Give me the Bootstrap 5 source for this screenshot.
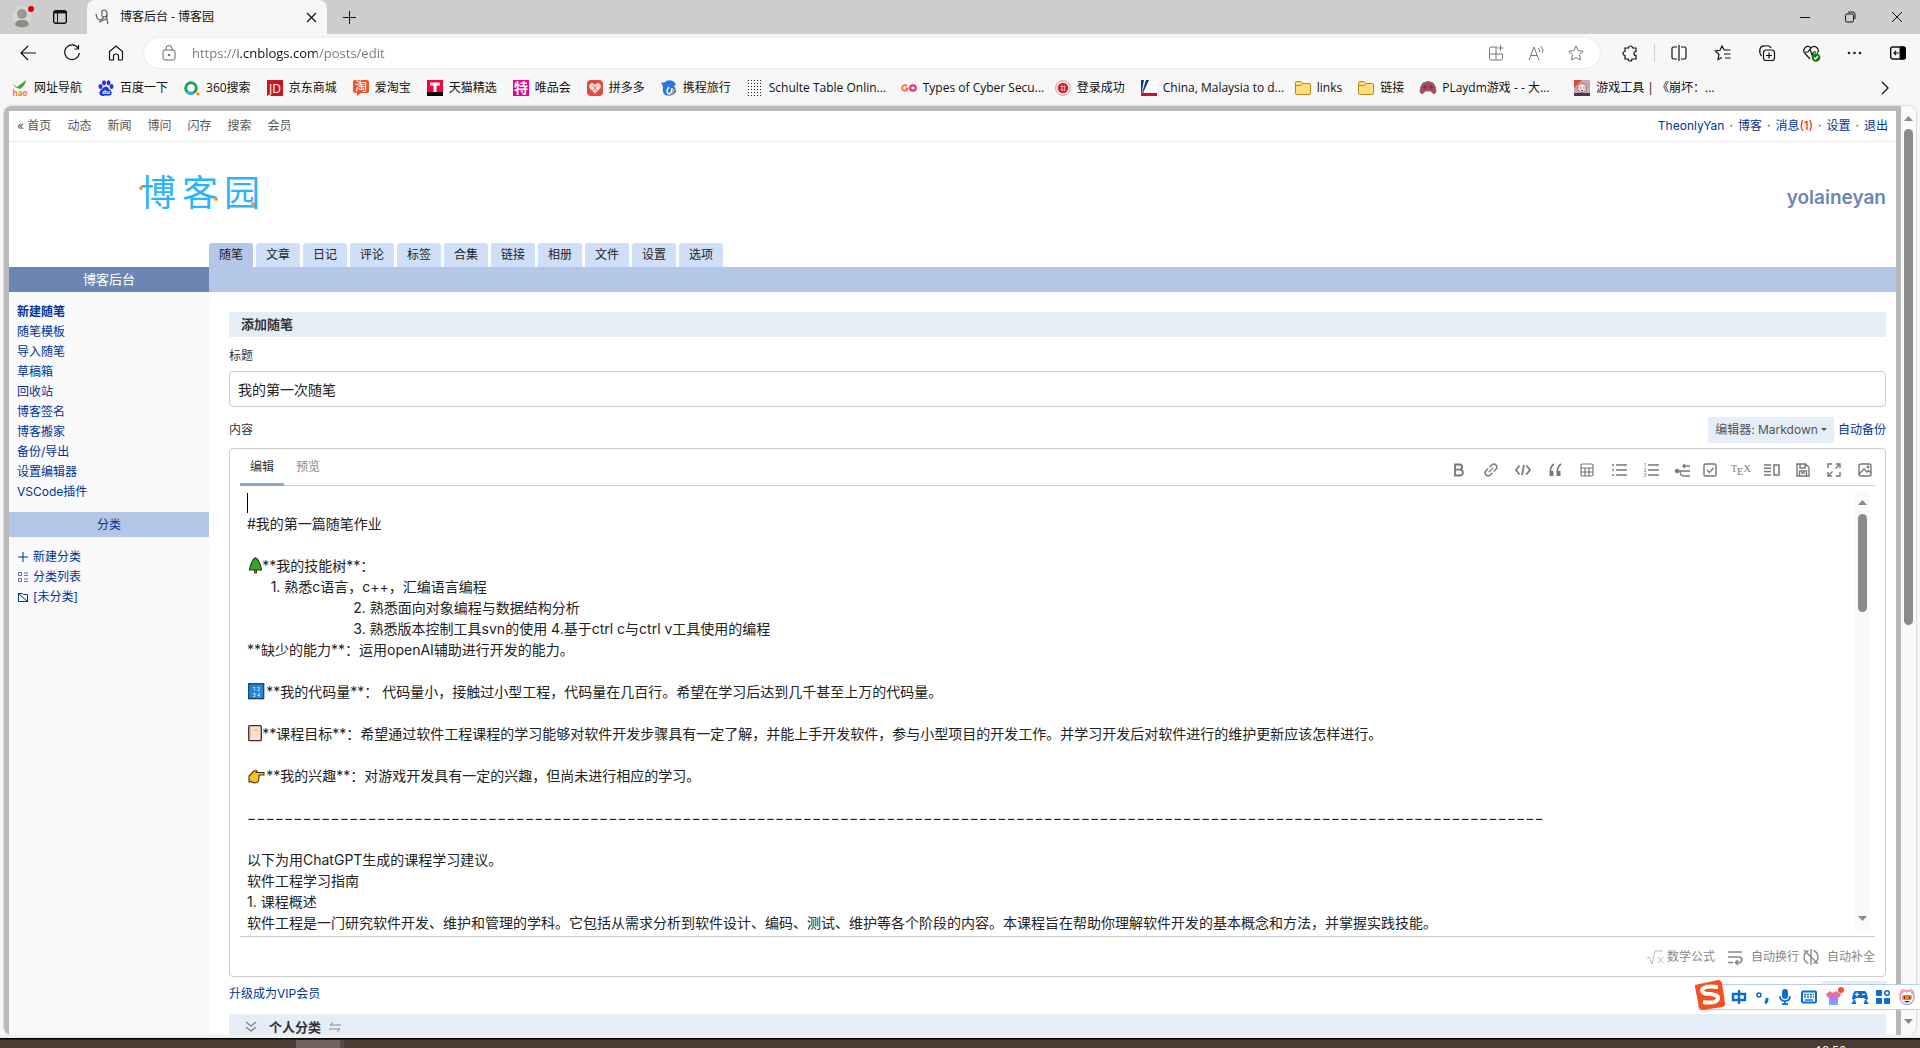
<!DOCTYPE html>
<html lang="zh-CN">
<head>
<meta charset="utf-8">
<meta name="viewport" content="width=device-width, initial-scale=1">
<title>博客后台 - 博客园</title>
<link href="https://cdn.jsdelivr.net/npm/bootstrap@5.3.0/dist/css/bootstrap.min.css" rel="stylesheet">
<style>
:root{--navy:#003399;--pale:#e5edf7;--steel:#b4c7e6;--frame:#b9b9b9}
html,body{height:100%}
body{font-family:Inter,"Noto Sans CJK SC",sans-serif;font-size:12px;line-height:18px;color:#333;background:#f7f7f7;overflow:hidden}
a{color:var(--navy);text-decoration:none}
button{background:none;border:0;padding:0;color:inherit}
svg{display:block;flex:none;overflow:visible}
svg:not([fill]){fill:none}
svg:not([stroke]){stroke:currentColor}
svg text{stroke:none;text-anchor:middle}
.chrome{font-family:"Open Sans","Noto Sans CJK SC",sans-serif;color:#111}
.tabstrip{background:#cdcdcd;height:34px}
.tabstrip-left{gap:20px;width:87px;padding-left:13px}
.tab-active{width:240px;background:#f7f7f7;border-radius:8px 8px 0 0;padding:0 11px 0 8px;gap:10px}
.win-controls{gap:32px;padding-right:17px}
.addrbar{height:38px;padding:0 14px 0 20px}
.nav-icons{gap:28px;width:124px}
.pill{height:30px;border-radius:15px;background:#fff;box-shadow:0 0 3px #ddd;padding:0 16px 0 18px}
.pill input{border:0;outline:0;font-size:13px;padding:0 0 0 16px;color:transparent;caret-color:#111;background:linear-gradient(90deg,#767676 62px,#111 62px,#111 141px,#767676 141px);-webkit-background-clip:text;background-clip:text}
.pill-icons{color:#777;gap:24px}
.tool-icons{gap:28px;padding-left:22px}
.split-group{gap:16px;margin-left:-12px}
.bookmarks{height:34px;padding:0 31px 2px 12px;gap:16px}
.bookmarks a{color:#111;gap:6px;white-space:nowrap}
.bookmarks .wide-bm{width:138px}
.viewport{margin:0 4px;min-height:0;border-radius:8px;overflow:hidden;box-shadow:0 0 2px #999}
.page{background:#fff;border:5px solid var(--frame);border-bottom:0;min-width:0;overflow:hidden}
.topnav{height:31px;border-bottom:1px dotted #d8d8d8;padding:0 8px}
.topnav .left a{color:#555}
.topnav .right{gap:5px}
.topnav .unread{color:#f00}
.masthead{height:101px;padding:0 10px 0 131px}
.brand{font-size:36px;line-height:40px;color:#2bb3ff;gap:6px}
.brand svg{left:0;top:0}
.blogname{font-size:19px;font-weight:600;color:#6b86b3;padding-top:10px}
.maintabs{gap:3px;padding-left:200px}
.maintabs a{width:44px;height:24px;line-height:24px;text-align:center;background:#cfdff8;color:#222;border-radius:3px 3px 0 0}
.maintabs a.active{background:var(--steel)}
.bar{height:25px;background:var(--steel)}
.bar-title{width:200px;background:#6b86b3;color:#fff;line-height:25px;font-size:13px}
.side{width:200px;background:#f9f9f9;padding-top:10px;line-height:20px}
.side a{padding-left:8px;gap:4px}
.side-head{height:25px;line-height:25px;font-size:12px;background:var(--steel);color:var(--navy);margin:10px 0}
.main-col{padding:20px 10px 0 20px;min-width:0}
.panel-head{height:25px;background:var(--pale);font-size:13px;font-weight:700;line-height:24px;padding:0 12px}
.field-label{padding-top:10px}
.title-input{height:36px;font-size:14px;color:#222;border:1px solid #ccc;border-radius:4px;padding:0 8px 1px;margin-top:6px}
.content-row{margin-top:10px}
.editor-pick{background:var(--pale);color:#555;width:126px;height:26px}
.editor{border:1px solid #ccc;border-radius:4px;padding:0 10px;margin-top:5px;color:#333}
.ed-head{border-bottom:1px solid #ccc;height:37px;color:#777}
.ed-tabs{gap:2px}
.ed-tools{gap:11px;padding:6px 2px 0 0}
.ed-tab{width:44px;height:37px;line-height:36px;text-align:center;color:#888;border-bottom:3px solid transparent}
.ed-tab.active{color:#333;border-color:#8fa5cd}
.tb1{gap:16px}.tb2{gap:15px}
.ed-body{padding:6px 5px 3px 7px;border-bottom:1px solid #ccc}
.ed-body textarea{font-size:14px;line-height:21px;color:#222;border:0;outline:0;resize:none;padding:0;overflow:hidden;height:441px;min-width:0;background:none}
.over{position:absolute;left:8px}
.caret{width:1px;height:20px;background:#000;left:7px;top:7px}
.l4{top:71px}.l10{top:197px}.l12{top:239px}.l14{top:281px}
.sbar{width:15px;background:#fafafa;color:#8a8a8a}
.sbar i{width:9px;border-radius:5px;background:#8b8b8b}
.ed-body .sbar{margin:-1px 0 2px}
.ed-body .sbar i{height:98px}
.page-sbar i{height:496px}
.sbar svg{fill:#8a8a8a;stroke:none}
.ed-foot{height:39px;color:#888}
.vip-row{height:37px}
.covered{width:64px;height:25px;background:var(--pale)}
.taskbar{height:13px}
.taskbar .edge{height:4px;border-bottom:1px solid #000;background:#f0f0f0}
.taskbar .strip{height:9px;background:#4a3b33;padding-left:296px;border-top:1px solid #222}
.task-btn{width:48px;height:9px;background:#6e625a;border-right:4px solid #574a43}
.clock{color:#fff;line-height:18px;padding-right:74px;font-family:"Open Sans",sans-serif;margin-top:2px}
.ime{position:fixed;right:0;bottom:38px;width:222px;height:26px;background:#fff;border:1px solid #b9cdea;border-right:0;border-radius:2px;color:#0a6cd6;padding:0 5px 0 32px}
.ime .logo{position:absolute;left:-5px;top:-6px}
</style>
</head>
<body class="d-flex flex-column">
<header class="chrome">
 <div class="tabstrip d-flex align-items-stretch">
  <div class="tabstrip-left d-flex align-items-center">
   <svg width="20" height="24" viewBox="0 0 20 24"><ellipse cx="9" cy="12" rx="9.500" ry="11" fill="#d9d5d1" stroke="none"/><circle cx="9" cy="9" r="5" fill="#999" stroke="none"/><path d="M2 20q0-5 7-5t7 5q-7 5-14 0z" fill="#8f8b87" stroke="none"/><circle cx="18" cy="4" r="3" fill="#e60000" stroke="none"/></svg>
   <svg width="14" height="14"><rect x=".7" y=".7" width="12.600" height="12.600" rx="2" stroke-width="1.400"/><path d="M1 2.200h12" stroke-width="2.400"/><path d="M4.500 3v10"/></svg>
  </div>
  <div class="tab-active d-flex align-items-center">
   <svg width="15" height="16" viewBox="0 0 15 16" stroke="#555" stroke-width="1.200"><path d="M1 5q1 6 4 6 3-1 4-3M7 5q-1-4 2-4t3 4q0 3-3 3T7 5M12 4q-1 6 1 11M4 13l7-3"/></svg>
   <span class="flex-grow-1">博客后台 - 博客园</span>
   <button aria-label="关闭标签页"><svg width="9" height="9"><path d="M0 0l9 9M9 0L0 9" stroke-width="1.200"/></svg></button>
  </div>
  <button class="ms-3" aria-label="新建标签页"><svg width="13" height="13"><path d="M6.500 0v13M0 6.500h13"/></svg></button>
  <div class="win-controls d-flex align-items-center ms-auto">
   <button aria-label="最小化"><svg width="14" height="12"><path d="M3 6.500h10"/></svg></button>
   <button aria-label="还原"><svg width="14" height="12"><rect x="2.500" y="3" width="8" height="8" rx="1.500"/><path d="M5 1.500Q5 1 7 1h2.500q2.500 0 2.500 2.500V8"/></svg></button>
   <button aria-label="关闭"><svg width="14" height="12"><path d="M3 1l10 10M13 1L3 11"/></svg></button>
  </div>
 </div>
 <div class="addrbar d-flex align-items-center">
  <div class="nav-icons d-flex">
   <button aria-label="后退"><svg width="16" height="16"><path d="M16 8H1M8 1L1 8l7 7" stroke-width="1.200"/></svg></button>
   <button aria-label="刷新"><svg width="16" height="16"><path d="M14 3A7.300 7.300 0 1 0 15.300 8M14.500 0v4h-4" stroke-width="1.200"/></svg></button>
   <button aria-label="主页"><svg width="16" height="16"><path d="M1.500 6.500L8 1l6.500 5.500V14q0 1-1 1h-3v-4q0-2-2.500-2t-2.500 2v4h-3q-1 0-1-1z" stroke-width="1.200"/></svg></button>
  </div>
  <div class="pill d-flex align-items-center flex-grow-1">
   <svg width="14" height="16" stroke="#666"><rect x="1" y="5" width="12" height="10" rx="2"/><path d="M4 5V3.500a3 3 0 0 1 6 0V5"/><circle cx="7" cy="10" r=".8" fill="#555"/></svg>
   <input class="flex-grow-1" aria-label="地址栏" value="https://i.cnblogs.com/posts/edit">
   <div class="pill-icons d-flex">
    <svg width="16" height="16"><path d="M9 2H3Q1.500 2 1.500 3.500v10Q1.500 15 3 15h10q1.500 0 1.500-1.500V9H1.500M8 2v13M12.500 0v6M9.500 3h6"/></svg>
    <svg width="16" height="16"><path d="M1 15L6 2l5 13M3 10.500h6M10 3q2 2 1.500 4M12.500 1Q16 4 14.500 8"/></svg>
    <svg width="16" height="16" viewBox="0 0 16 16"><path d="M8 1l2.200 4.600 5 .7-3.600 3.500.9 5.100L8 12.500l-4.500 2.400.9-5.100L.8 6.300l5-.7z"/></svg>
   </div>
  </div>
  <div class="tool-icons d-flex align-items-center">
   <svg width="16" height="16" stroke-width="1.200"><path d="M4 3h2.500a2 2 0 1 1 4 0H14v3.500a2 2 0 1 0 0 4V14h-4a2 2 0 0 1-4 0H3v-3.500a2 2 0 1 1 0-4V3z"/></svg>
   <div class="split-group d-flex align-items-center"><svg width="1" height="18" stroke="#ccc"><path d="M.5 0v18"/></svg>
   <svg width="16" height="16" stroke-width="1.200"><path d="M6 2H2.500Q1 2 1 3.500v9Q1 14 2.500 14H6M10 2h3.500Q15 2 15 3.500v9q0 1.500-1.500 1.500H10M8 0v16"/></svg></div>
   <svg width="16" height="16" stroke-width="1.200"><path d="M15.500 5H9.300L7 1 5 5.300l-4.500.7L4 9.500 3 14.500l4-2M9 9h6.500M10 13h5.500"/></svg>
   <svg width="16" height="16" stroke-width="1.200"><rect x="4.500" y="5" width="11" height="10.500" rx="2.500"/><path d="M10 7.500v6M7 10.500h6M2.500 11Q0 8 1 4q1-3.500 5-3 5-1 6 2"/></svg>
   <svg width="16" height="16" stroke-width="1.200"><path d="M7 14L1.500 8C-1 4 4-1 8 3c4-4 9 1 6.500 5M2 7h3l2-3 2 6 1.500-3H13"/><circle cx="13" cy="12.500" r="4.300" fill="#107c10" stroke="none"/><path d="M11 12.500l1.500 1.500 2.500-3" stroke="#fff"/></svg>
   <svg width="15" height="16"><g fill="#222" stroke="none"><circle cx="2" cy="8" r="1.300"/><circle cx="7.500" cy="8" r="1.300"/><circle cx="13" cy="8" r="1.300"/></g></svg>
   <svg width="16" height="16"><rect x=".7" y="2" width="14.600" height="12" rx="2" stroke-width="1.400"/><path d="M10 2h4q1.300 0 1.300 1.300v9.400Q15.300 14 14 14h-4z" fill="#000"/><path d="M9 8H4m2-2L4 8l2 2" stroke-width="1.200"/></svg>
  </div>
 </div>
 <nav class="bookmarks d-flex align-items-center">
  <a class="d-flex align-items-center" href="#"><svg width="16" height="16"><path d="M1 4l4 3 9-7q0 5-6 9-5-1-7-5z" fill="#4a3" stroke="none"/><text x="8" y="16" font-size="8" font-weight="700" fill="#f47a1f">hao</text></svg>网址导航</a>
  <a class="d-flex align-items-center" href="#"><svg width="16" height="16"><g fill="#2832e0" stroke="none"><ellipse cx="2.500" cy="6.500" rx="2" ry="2.500"/><ellipse cx="6" cy="2.800" rx="2" ry="2.600"/><ellipse cx="10.500" cy="2.800" rx="2" ry="2.600"/><ellipse cx="13.600" cy="6.500" rx="1.900" ry="2.500"/><path d="M8 6.500q2 0 3 2.500 4 3 2 6-2 1-5 .5-4 1-6-.5-2-3 2-6 2-2.500 4-2.500z"/></g><text x="8" y="14" font-size="6" font-weight="700" fill="#fff">du</text></svg>百度一下</a>
  <a class="d-flex align-items-center" href="#"><svg width="16" height="16"><rect width="16" height="16" fill="#fff" stroke="none"/><circle cx="7" cy="8" r="5.300" stroke="#19a35b" stroke-width="3"/><path d="M3 12q3 3 7 1" stroke="#35b1e8" stroke-width="2.500"/><circle cx="14" cy="14" r="1.700" fill="#f80" stroke="none"/></svg>360搜索</a>
  <a class="d-flex align-items-center" href="#"><svg width="16" height="16"><rect width="16" height="16" fill="#c91623" stroke="none"/><text x="8" y="12.500" font-size="12" fill="#fff">JD</text></svg>京东商城</a>
  <a class="d-flex align-items-center" href="#"><svg width="16" height="16"><path d="M2 0h12q2 0 2 2v9q0 2-2 2H8l-4 3v-3H2q-2 0-2-2V2q0-2 2-2z" fill="#f0562a" stroke="none"/><text x="8" y="11" font-size="12" fill="#fff">淘</text></svg>爱淘宝</a>
  <a class="d-flex align-items-center" href="#"><svg width="16" height="16"><path d="M0 0h16v12H0z" fill="#ff0036" stroke="none"/><path d="M0 12h16v4H0z" fill="#000" stroke="none"/><path d="M3 4h10M8 4v8" stroke="#fff" stroke-width="3"/></svg>天猫精选</a>
  <a class="d-flex align-items-center" href="#"><svg width="16" height="16"><rect width="16" height="16" fill="#e5048c" stroke="none"/><text x="8" y="13" font-size="14" font-weight="700" fill="#fff">特</text></svg>唯品会</a>
  <a class="d-flex align-items-center" href="#"><svg width="16" height="16"><rect width="16" height="16" rx="4" fill="#e2493f" stroke="none"/><path d="M8 14L2.500 8C1 4 5 1.500 8 4.500 11 1.500 15 4 13.500 8z" fill="#fbe3df" stroke="none"/><path d="M5 5l6 6M11 5l-6 6M8 4v9" stroke="#e2867e"/></svg>拼多多</a>
  <a class="d-flex align-items-center" href="#"><svg width="16" height="16"><path d="M0 2q2 1 4 0 3-3 8-1l3 3-2 2q4 5 0 8-4 3-9 1Q1 12 2 8 2 6 0 2z" fill="#2577e3" stroke="none"/><path d="M8 7q-4 5 0 7 3-1 3-6" stroke="#fff" stroke-width="1.600"/><path d="M9 14q4-1 4-5" stroke="#ffa21a" stroke-width="1.600"/></svg>携程旅行</a>
  <a class="d-flex align-items-center wide-bm" href="#"><svg width="16" height="16"><path d="M1 .5h15M1 3.500h15M1 6.500h15M1 9.500h15M1 12.500h15M1 15.500h15" stroke="#222" stroke-dasharray="1 2"/></svg>Schulte Table Onlin...</a>
  <a class="d-flex align-items-center wide-bm" href="#"><svg width="16" height="16"><path d="M6 6a2.800 2.800 0 1 0 .7 2.500H4.500" stroke="#ff6a3d" stroke-width="1.800"/><circle cx="12" cy="8" r="2.800" stroke="#f0286a" stroke-width="2"/></svg>Types of Cyber Secu...</a>
  <a class="d-flex align-items-center" href="#"><svg width="16" height="16"><circle cx="8" cy="8" r="7.300" stroke="#e08a8a"/><circle cx="8" cy="8" r="5.300" fill="#c4272d" stroke="none"/><path d="M5.500 6.500h5M5.500 10h5M7 5v6M9.500 5v6" stroke="#e9a0a0"/></svg>登录成功</a>
  <a class="d-flex align-items-center wide-bm" href="#"><svg width="16" height="16"><rect width="16" height="16" fill="#fff" stroke="none"/><path d="M0 16V0h3L0 16 5 0h3L2 13z" fill="#0b3a75" stroke="none"/><path d="M1 13h15v3H0z" fill="#c8102e" stroke="none"/></svg>China, Malaysia to d...</a>
  <a class="d-flex align-items-center" href="#"><svg width="16" height="16"><path d="M.5 3q0-1.500 1.500-1.500h4l2 2h6q1.500 0 1.500 1.500v8q0 1.500-1.500 1.500H2Q.5 14.500.5 13z" fill="#ffdc80" stroke="#b98b18"/><path d="M1 5.500h5l2-2" stroke="#b98b18"/></svg>links</a>
  <a class="d-flex align-items-center" href="#"><svg width="16" height="16"><path d="M.5 3q0-1.500 1.500-1.500h4l2 2h6q1.500 0 1.500 1.500v8q0 1.500-1.500 1.500H2Q.5 14.500.5 13z" fill="#ffdc80" stroke="#b98b18"/><path d="M1 5.500h5l2-2" stroke="#b98b18"/></svg>链接</a>
  <a class="d-flex align-items-center wide-bm" href="#"><svg width="16" height="16"><path d="M3 3q5-3 10 0 3 3 3 9-2 4-5-1H5q-3 5-5 1 0-6 3-9z" fill="#b8405a" stroke="#777"/><path d="M3 7h4M5 5v4M11 5v4M9 7h4" stroke="#444"/></svg>PLaydm游戏 - - 大...</a>
  <a class="d-flex align-items-center wide-bm" href="#"><svg width="16" height="16"><rect width="16" height="16" fill="#c9a8b4" stroke="none"/><path d="M0 0h8L0 8z" fill="#d84a3c" stroke="none"/><circle cx="8" cy="8" r="4.500" fill="#f6dfd6" stroke="#8c6a86"/><path d="M6 8h1M9.500 8h1M7 10.500h2" stroke="#733"/><path d="M0 13h16v3H0z" fill="#3c3a58" stroke="none"/></svg>游戏工具 | 《崩坏：...</a>
  <button class="ms-auto" aria-label="更多收藏"><svg width="8" height="12"><path d="M1 0l6 6-6 6" stroke-width="1.300"/></svg></button>
 </nav>
</header>

<div class="viewport d-flex flex-grow-1">
 <div class="page flex-grow-1 d-flex flex-column">
  <nav class="topnav d-flex align-items-center justify-content-between flex-shrink-0">
   <div class="left d-flex gap-3"><a href="#">« 首页</a><a href="#">动态</a><a href="#">新闻</a><a href="#">博问</a><a href="#">闪存</a><a href="#">搜索</a><a href="#">会员</a></div>
   <div class="right d-flex"><a href="#">TheonlyYan</a><span>·</span><a href="#">博客</a><span>·</span><a href="#">消息<span class="unread">(1)</span></a><span>·</span><a href="#">设置</a><span>·</span><a href="#">退出</a></div>
  </nav>
  <div class="masthead d-flex align-items-center justify-content-between flex-shrink-0">
   <a class="brand d-flex position-relative" href="#"><span>博</span><span>客</span><span>园</span>
    <svg class="position-absolute" width="122" height="40"><g fill="#ff9524" stroke="none"><circle cx="1" cy="15" r="2"/><circle cx="76" cy="26" r="2"/><circle cx="113" cy="31" r="2"/></g></svg></a>
   <a class="blogname" href="#">yolaineyan</a>
  </div>
  <nav class="maintabs d-flex flex-shrink-0"><a class="active" href="#">随笔</a><a href="#">文章</a><a href="#">日记</a><a href="#">评论</a><a href="#">标签</a><a href="#">合集</a><a href="#">链接</a><a href="#">相册</a><a href="#">文件</a><a href="#">设置</a><a href="#">选项</a></nav>
  <div class="bar flex-shrink-0"><div class="bar-title text-center">博客后台</div></div>
  <div class="d-flex flex-grow-1">
   <aside class="side flex-shrink-0">
    <nav class="d-flex flex-column"><a class="fw-bold" href="#">新建随笔</a><a href="#">随笔模板</a><a href="#">导入随笔</a><a href="#">草稿箱</a><a href="#">回收站</a><a href="#">博客签名</a><a href="#">博客搬家</a><a href="#">备份/导出</a><a href="#">设置编辑器</a><a href="#">VSCode插件</a></nav>
    <div class="side-head text-center">分类</div>
    <nav class="d-flex flex-column">
     <a class="d-flex align-items-center" href="#"><svg width="12" height="12"><path d="M6 1v10M1 6h10"/></svg>新建分类</a>
     <a class="d-flex align-items-center" href="#"><svg width="12" height="12" stroke="#5577ae"><path d="M1.500 1.500h3v3h-3zM1.500 7.500h3v3h-3zM7 2h4M7 4.500h4M7 8h4M7 10.500h4"/></svg>分类列表</a>
     <a class="d-flex align-items-center" href="#"><svg width="12" height="12"><path d="M1.500 2.500h4l1 1h4v7h-9zM1 2l10 9"/></svg>[未分类]</a>
    </nav>
   </aside>
   <main class="main-col flex-grow-1">
    <div class="panel-head">添加随笔</div>
    <label class="field-label d-block" for="post-title">标题</label>
    <input class="title-input d-block w-100" id="post-title" value="我的第一次随笔">
    <div class="content-row d-flex align-items-center justify-content-between">
     <label for="post-body">内容</label>
     <div class="d-flex align-items-center gap-1"><button class="editor-pick dropdown-toggle" type="button">编辑器: Markdown</button><a href="#">自动备份</a></div>
    </div>
    <section class="editor">
     <div class="ed-head d-flex justify-content-between">
      <div class="ed-tabs d-flex"><button class="ed-tab active">编辑</button><button class="ed-tab">预览</button></div>
      <div class="ed-tools d-flex align-items-center">
       <div class="d-flex tb1">
        <button aria-label="粗体"><svg width="16" height="16"><path d="M4 2.500h4.500a2.600 2.600 0 0 1 0 5.200H4zM4 7.700h5a2.900 2.900 0 0 1 0 5.800H4z" stroke-width="1.800"/></svg></button>
        <button aria-label="链接"><svg width="16" height="16" stroke-width="1.400"><g transform="rotate(-45 8 8)"><path d="M7 5H4a3 3 0 0 0 0 6h3M9 5h3a3 3 0 0 1 0 6H9M5 8h6"/></g></svg></button>
        <button aria-label="代码"><svg width="16" height="16" stroke-width="1.700"><path d="M4.500 3.500L1 8l3.500 4.500M11.500 3.500L15 8l-3.500 4.500M9 3L7 13"/></svg></button>
        <button aria-label="引用"><svg width="16" height="16"><path d="M7 2Q3 5 3.500 9.500M14 2q-4 3-3.500 7.500" stroke-width="1.600"/><path d="M2.500 9h4v5h-4zM9.500 9h4v5h-4z" fill="currentColor" stroke="none"/></svg></button>
        <button aria-label="表格"><svg width="16" height="16" stroke-width="1.200"><rect x="2" y="2" width="12" height="12" rx="1.500"/><path d="M2 6h12M6 6v8M10 6v8M2 10h12"/></svg></button>
        <button aria-label="无序列表"><svg width="16" height="16" stroke-width="1.500"><path d="M5 3h11M5 8h11M5 13h11M1 3h2M1 8h2M1 13h2"/></svg></button>
        <button aria-label="有序列表"><svg width="16" height="16" stroke-width="1.500"><path d="M5 3h11M5 8h11M5 13h11"/><g fill="currentColor" font-size="5"><text x="2" y="5">1</text><text x="2" y="10">2</text><text x="2" y="15">3</text></g></svg></button>
        <button aria-label="缩进"><svg width="16" height="16" stroke-width="1.400"><path d="M1 9h14M15 4H8M10 2L8 4l2 2M5 9q0 5 4 5h6"/><circle cx="2" cy="9" r="1.500" fill="currentColor"/></svg></button>
       </div>
       <div class="d-flex tb2">
        <button aria-label="任务"><svg width="16" height="16" stroke-width="1.400"><rect x="2" y="2" width="12" height="12" rx="1.500"/><path d="M5 8l2.500 2.500L11.500 6"/></svg></button>
        <button aria-label="公式"><svg width="16" height="16" fill="currentColor" font-family="Liberation Serif" font-size="10"><text x="1" y="10">T</text><text x="7" y="13">E</text><text x="14" y="10">X</text></svg></button>
        <button aria-label="分栏"><svg width="16" height="16" stroke-width="1.500"><path d="M0 3h7M0 6.300h7M0 9.600h7M0 13h7M10 3h5v10h-5z"/></svg></button>
        <button aria-label="保存"><svg width="16" height="16" stroke-width="1.400"><path d="M2 2h8.500L14 5.500V14H2zM5 2v4h5V2M4.500 14V9h7v5M6 11h4"/></svg></button>
        <button aria-label="全屏"><svg width="16" height="16" stroke-width="1.400"><path d="M2 6V2h4M10 2h4v4M14 10v4h-4M6 14H2v-4M13 3L9.500 6.500M3 13l3.500-3.500"/></svg></button>
        <button aria-label="图片"><svg width="16" height="16" stroke-width="1.400"><rect x="2" y="2" width="12" height="12" rx="2"/><path d="M2 12l5-5 3 3 1.500-1.500L14 11"/><circle cx="11" cy="5" r=".7"/></svg></button>
       </div>
      </div>
     </div>
     <div class="ed-body d-flex position-relative">
      <textarea id="post-body" class="flex-grow-1" rows="21" spellcheck="false">

#我的第一篇随笔作业

&emsp;&hairsp;**我的技能树**：
      1. 熟悉c语言，c++，汇编语言编程
                           2. 熟悉面向对象编程与数据结构分析
                           3. 熟悉版本控制工具svn的使用 4.基于ctrl c与ctrl v工具使用的编程
**缺少的能力**：运用openAI辅助进行开发的能力。

&emsp;&hairsp; **我的代码量**： 代码量小，接触过小型工程，代码量在几百行。希望在学习后达到几千甚至上万的代码量。

&emsp;&hairsp;**课程目标**：希望通过软件工程课程的学习能够对软件开发步骤具有一定了解，并能上手开发软件，参与小型项目的开发工作。并学习开发后对软件进行的维护更新应该怎样进行。

&emsp;&hairsp; **我的兴趣**：对游戏开发具有一定的兴趣，但尚未进行相应的学习。

−−−−−−−−−−−−−−−−−−−−−−−−−−−−−−−−−−−−−−−−−−−−−−−−−−−−−−−−−−−−−−−−−−−−−−−−−−−−−−−−−−−−−−−−−−−−−−−−−−−−−−−−−−−−−−−−−−−−−−−−−−−−−−−−−−−−−−−−−−−−

以下为用ChatGPT生成的课程学习建议。
软件工程学习指南
1. 课程概述
软件工程是一门研究软件开发、维护和管理的学科。它包括从需求分析到软件设计、编码、测试、维护等各个阶段的内容。本课程旨在帮助你理解软件开发的基本概念和方法，并掌握实践技能。</textarea>
      <span class="over caret"></span>
      <svg class="over l4" width="15" height="17"><path d="M7.500.7Q10 2 11 5q2 3 2.500 8H1.500Q2 8 4 5q1-3 3.500-4.300z" fill="#2ea82e" stroke="#1d3b1d" stroke-width="1.200"/><path d="M6.500 13h2v3h-2z" fill="#d8642a" stroke="#5a2a10"/></svg>
      <svg class="over l10" width="17" height="17"><rect x=".7" y=".7" width="15" height="15" fill="#1f86dc" stroke="#22435f" stroke-width="1.300"/><g fill="#fff" font-size="5"><text x="6" y="7.500">1</text><text x="10.500" y="7.500">2</text><text x="6" y="13.500">3</text><text x="10.500" y="13.500">4</text></g></svg>
      <svg class="over l12" width="15" height="17"><rect x=".7" y=".7" width="12.600" height="15" rx="1" fill="#f9dfd3" stroke="#3f2d28" stroke-width="1.300"/><path d="M2.500 2v12" stroke="#dbb"/><path d="M6 4h4v2H6z" fill="#ffd52e" stroke="none"/></svg>
      <svg class="over l14" width="17" height="17"><path d="M1 9l5-5q2-1 3 0l-1 1.500h8v2.500h-5v1.500q0 5-2 6-4 1-6-1l-2 .5z" fill="#fcc21b" stroke="#3f3315" stroke-width="1.100"/></svg>
      <div class="sbar d-flex flex-column align-items-center">
       <svg width="9" height="23"><path d="M0 14l4.500-5L9 14z"/></svg><i></i><svg class="mt-auto" width="9" height="15"><path d="M0 0l4.500 5L9 0z"/></svg>
      </div>
     </div>
     <div class="ed-foot d-flex align-items-center justify-content-end">
      <div class="d-flex align-items-center gap-1"><svg width="16" height="16" stroke="#bbb"><path d="M0 9l2-1 3 7L8 2h8M11 8l5 6M16 8l-5 6"/></svg><span>数学公式</span></div>
      <div class="d-flex align-items-center gap-2 ms-2 ps-1"><svg width="16" height="16" stroke-width="1.700"><path d="M1 3h14M1 8h11a2.800 2.800 0 0 1 0 5.600H9M11 11l-2.500 2.500L11 16M1 13.500h5"/></svg><span>自动换行</span></div>
      <div class="d-flex align-items-center gap-2 ms-1"><svg width="16" height="16" stroke-width="1.400"><path d="M5.500 1.500a7 7 0 0 0 0 13M10.500 1.500a7 7 0 0 1 0 13M8 0v16M1 1l14 14"/></svg><span>自动补全</span></div>
     </div>
    </section>
    <div class="vip-row d-flex justify-content-between"><a class="pt-2" href="#">升级成为VIP会员</a><div class="covered mt-1"></div></div>
    <div class="panel-head d-flex align-items-center"><svg class="ms-1" width="12" height="12" stroke="#888"><path d="M1 1l5 4 5-4M1 6l5 4 5-4" stroke-width="1.400"/></svg>
     <span class="mx-2 ps-1">个人分类</span><svg width="12" height="12" stroke="#888"><path d="M12 4H1l3-3M0 8h11l-3 3"/></svg></div>
   </main>
  </div>
 </div>
 <div class="sbar page-sbar d-flex flex-column align-items-center">
  <svg width="9" height="23"><path d="M0 15l4.500-5L9 15z"/></svg><i></i><svg class="mt-auto" width="9" height="16"><path d="M0 0l4.500 5L9 0z"/></svg>
 </div>
</div>
<footer class="taskbar overflow-hidden flex-shrink-0"><div class="edge"></div><div class="strip d-flex justify-content-between"><div class="task-btn"></div><span class="clock">18:50</span></div></footer>

<div class="ime d-flex align-items-center justify-content-between">
 <svg class="logo" width="32" height="32"><path d="M1 6L24 1q3 0 4 3l3 20q0 4-3 4L9 31q-3 0-4-3L1 8z" fill="#f4511e" stroke="none"/><path d="M24 8q-14-2-16 3 0 4 8 4 9 1 8 5-2 5-15 3" stroke="#fff" stroke-width="4"/></svg>
 <svg width="16" height="16" stroke-width="2.400"><path d="M2 5h12v6H2zM8 1v14"/></svg>
 <svg width="14" height="16"><circle cx="3" cy="6" r="2" stroke-width="1.600"/><path d="M11 9v1q0 3-2 4" stroke-width="3"/></svg>
 <svg width="14" height="16"><rect x="4" y="0" width="6" height="10" rx="3" fill="currentColor" stroke="none"/><path d="M2 7q0 5 5 5t5-5M7 12v3M4 15.200h6" stroke-width="1.700"/></svg>
 <svg width="16" height="14"><rect x="1" y="1.500" width="14" height="11" rx="1" stroke-width="2"/><path d="M3 4.500h10M3 7h10" stroke-dasharray="2 1" stroke-width="1.500"/><path d="M4 10h8" stroke-width="1.500"/></svg>
 <svg width="17" height="18"><defs><linearGradient id="g" x2="0" y2="1"><stop stop-color="#ff6f61"/><stop offset=".6" stop-color="#b07aff"/><stop offset="1" stop-color="#5bb6ff"/></linearGradient></defs><path d="M0 6l4-3q3 3 6 0l5 3-2 4-1-1v8H3V9l-1 1z" fill="url(#g)" stroke="none"/><circle cx="15" cy="2" r="3" fill="#ff4b2b" stroke="none"/></svg>
 <svg width="16" height="14"><path d="M3 1h10q2 1 3 8-2 2-4-1H4q-2 3-4 1Q1 2 3 1z" fill="currentColor" stroke="none"/><path d="M3 4.500h4M5 2.500v4M10 4.500h3" stroke="#fff" stroke-width="1.200"/><path d="M3 10l-2 3h3M13 10l2 3h-3" stroke-width="2"/></svg>
 <svg width="14" height="14" fill="currentColor" stroke="none"><rect width="6" height="6" rx="1"/><circle cx="11" cy="3" r="2.300" stroke="currentColor" stroke-width="1.500" fill="none"/><rect y="8" width="6" height="6" rx="1"/><rect x="8" y="8" width="6" height="6" rx="1"/></svg>
 <svg width="16" height="16"><circle cx="8" cy="8.500" r="7" fill="#fff" stroke="#a9a4ff" stroke-width="1.500"/><path d="M1 6Q2 0 5 1l3 2 3-2q3-1 4 5" stroke="#ff9aa8" stroke-width="1.500"/><rect x="3" y="6" width="10" height="5" rx="2" fill="#ff7a1a" stroke="none"/><path d="M5 12q3 3 6 0z" fill="#333" stroke="none"/><path d="M5.500 7.500v2M10.500 7.500v2" stroke="#222"/></svg>
</div>
<script src="https://cdn.jsdelivr.net/npm/bootstrap@5.3.0/dist/js/bootstrap.bundle.min.js"></script>
</body>
</html>
